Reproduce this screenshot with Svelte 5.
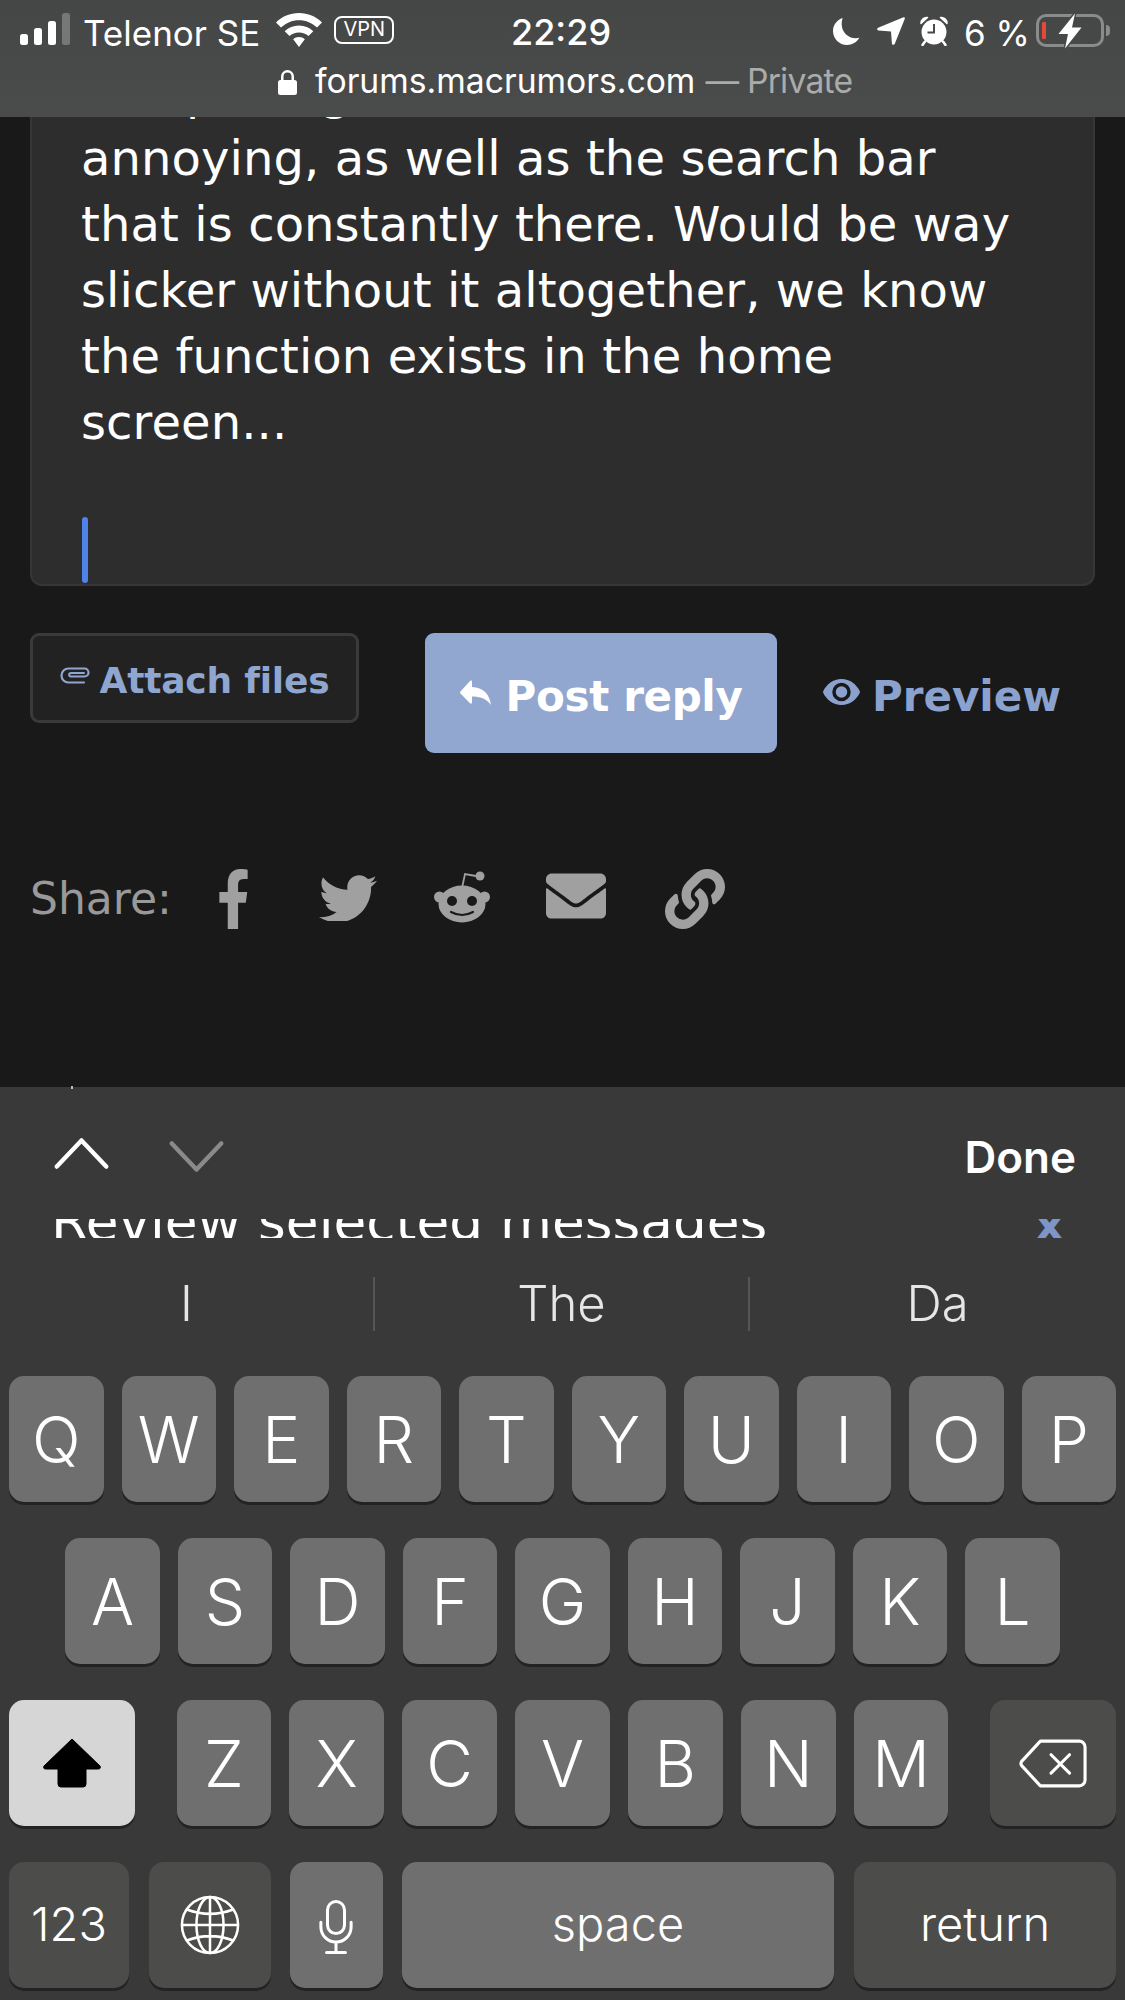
<script>
  const rows = [
    ['Q','W','E','R','T','Y','U','I','O','P'],
    ['A','S','D','F','G','H','J','K','L'],
    ['Z','X','C','V','B','N','M']
  ];
</script>

<div class="screen">
  <main class="page">
    <section class="card">
      <p class="body">The pricing
annoying, as well as the search bar
that is constantly there. Would be way
slicker without it altogether, we know
the function exists in the home
screen...</p>
      <span class="caret"></span>
    </section>

    <div class="actions">
      <button class="attach">
        <svg class="clip" viewBox="0 0 30 17" fill="none" stroke="currentColor" stroke-width="2.200" stroke-linecap="round"><path d="M24 15.500H8.500A7 7 0 0 1 8.500 1.500H24.500A4 4 0 0 1 24.500 9.500H10.500A1.800 1.800 0 0 1 10.500 6H24"/></svg>
        Attach files
      </button>
      <button class="post">
        <svg class="reply" viewBox="0 0 31 25" fill="currentColor"><path d="M0.500 11.500L10 1C10.800 .2 12 .7 12 1.800V7C23 7.500 29.500 14 31 25C26.500 18.500 20 16.500 12 16.500V22.500C12 23.600 10.800 24.100 10 23.300L0.500 13.500A1.400 1.400 0 0 1 0.500 11.500Z"/></svg>
        Post reply
      </button>
      <button class="preview">
        <svg class="eye" viewBox="0 0 37 26" fill="currentColor"><path d="M18.500 0C10 0 3.500 5.500 .3 12A2.200 2.200 0 0 0 .3 14C3.500 20.500 10 26 18.500 26S33.500 20.500 36.700 14A2.200 2.200 0 0 0 36.700 12C33.500 5.500 27 0 18.500 0Z"/><circle cx="18.500" cy="13" r="7.500" stroke="#191919" stroke-width="3.500"/></svg>
        Preview
      </button>
    </div>

    <div class="share">
      <span class="share-label">Share:</span>
      <svg class="fb" viewBox="0 0 320 512" fill="currentColor" preserveAspectRatio="none"><path d="M279.14 288l14.22-92.66h-88.91v-60.13c0-25.35 12.42-50.06 52.24-50.06h40.42V6.26S260.43 0 225.36 0c-73.22 0-121.08 44.38-121.08 124.72v70.62H22.89V288h81.39v224h100.17V288z"/></svg>
      <svg class="tw" viewBox="0 32 512 416" fill="currentColor"><path d="M459.37 151.716c.325 4.548.325 9.097.325 13.645 0 138.72-105.583 298.558-298.558 298.558-59.452 0-114.68-17.219-161.137-47.106 8.447.974 16.568 1.299 25.34 1.299 49.055 0 94.213-16.568 130.274-44.832-46.132-.975-84.792-31.188-98.112-72.772 6.498.974 12.995 1.624 19.818 1.624 9.421 0 18.843-1.3 27.614-3.573-48.081-9.747-84.143-51.98-84.143-102.985v-1.299c13.969 7.797 30.214 12.67 47.431 13.319-28.264-18.843-46.781-51.005-46.781-87.391 0-19.492 5.197-37.36 14.294-52.954 51.655 63.675 129.3 105.258 216.365 109.807-1.624-7.797-2.599-15.918-2.599-24.04 0-57.828 46.782-104.934 104.934-104.934 30.213 0 57.502 12.67 76.67 33.137 23.715-4.548 46.456-13.32 66.599-25.34-7.798 24.366-24.366 44.833-46.132 57.827 21.117-2.273 41.584-8.122 60.426-16.243-14.292 20.791-32.161 39.308-52.628 54.253z"/></svg>
      <svg class="rd" viewBox="0 0 56 52" fill="currentColor">
        <path d="M28 17 L31 3 L42 5" fill="none" stroke="currentColor" stroke-width="1.800"/>
        <circle cx="46" cy="5" r="4.500"/>
        <circle cx="5.500" cy="26" r="5.500"/>
        <circle cx="50.500" cy="26" r="5.500"/>
        <ellipse cx="28" cy="33" rx="23.500" ry="18.500"/>
        <circle cx="18" cy="30" r="5" fill="#191919"/>
        <circle cx="38" cy="30" r="5" fill="#191919"/>
        <path d="M17 41 Q28 47 39 41" fill="none" stroke="#191919" stroke-width="2.200" stroke-linecap="round"/>
      </svg>
      <svg class="ml" viewBox="0 64 512 384" fill="currentColor"><path d="M502.3 190.8c3.9-3.1 9.7-.2 9.7 4.7V400c0 26.5-21.5 48-48 48H48c-26.5 0-48-21.5-48-48V195.6c0-5 5.7-7.8 9.7-4.7 22.4 17.4 52.1 39.5 154.1 113.6 21.1 15.4 56.7 47.8 92.2 47.6 35.7.3 72-32.8 92.3-47.6 102-74.1 131.6-96.3 154-113.7zM256 320c23.2.4 56.6-29.2 73.4-41.4 132.7-96.3 142.8-104.7 173.4-128.7 5.8-4.5 9.2-11.5 9.2-18.9v-19c0-26.5-21.5-48-48-48H48C21.5 64 0 85.5 0 112v19c0 7.4 3.4 14.3 9.2 18.9 30.6 23.9 40.7 32.4 173.4 128.7 16.8 12.2 50.2 41.8 73.4 41.4z"/></svg>
      <svg class="lk" viewBox="0 0 512 512" fill="currentColor"><path d="M326.612 185.391c59.747 59.809 58.927 155.698.36 214.59-.11.12-.24.25-.36.37l-67.2 67.2c-59.27 59.27-155.699 59.262-214.96 0-59.27-59.26-59.27-155.7 0-214.96l37.106-37.106c9.84-9.84 26.786-3.3 27.294 10.606.648 17.722 3.826 35.527 9.69 52.721 1.986 5.822.567 12.262-3.783 16.612l-13.087 13.087c-28.026 28.026-28.905 73.66-1.155 101.96 28.024 28.579 74.086 28.749 102.325.51l67.2-67.19c28.191-28.191 28.073-73.757 0-101.83-3.701-3.694-7.429-6.564-10.341-8.569a16.037 16.037 0 0 1-6.947-12.606c-.396-10.567 3.348-21.456 11.698-29.806l21.054-21.055c5.521-5.521 14.182-6.199 20.584-1.731a152.482 152.482 0 0 1 20.522 17.197zM467.547 44.449c-59.261-59.262-155.69-59.27-214.96 0l-67.2 67.2c-.12.12-.25.25-.36.37-58.566 58.892-59.387 154.781.36 214.59a152.454 152.454 0 0 0 20.521 17.196c6.402 4.468 15.064 3.789 20.584-1.731l21.054-21.055c8.35-8.35 12.094-19.239 11.698-29.806a16.037 16.037 0 0 0-6.947-12.606c-2.912-2.005-6.64-4.875-10.341-8.569-28.073-28.073-28.191-73.639 0-101.83l67.2-67.19c28.239-28.239 74.3-28.069 102.325.51 27.75 28.3 26.872 73.934-1.155 101.96l-13.087 13.087c-4.35 4.35-5.769 10.79-3.783 16.612 5.864 17.194 9.042 34.999 9.69 52.721.509 13.906 17.454 20.446 27.294 10.606l37.106-37.106c59.271-59.259 59.271-155.699.001-214.959z"/></svg>
    </div>
  </main>

  <header class="bar">
    <div class="status">
      <div class="st-left">
        <div class="signal"><i class="s1"></i><i class="s2"></i><i class="s3"></i><i class="s4"></i></div>
        <span class="carrier">Telenor SE</span>
        <svg class="wifi" viewBox="0 0 46 34" fill="#fff">
          <path d="M23 0C14 0 6 3.500 0 9.500L5 14.500C10 9.800 16 7.200 23 7.200S36 9.800 41 14.500L46 9.500C40 3.500 32 0 23 0Z"/>
          <path d="M23 12.500C17.500 12.500 12.500 14.700 8.700 18.200L13.500 23C16 20.800 19.300 19.500 23 19.500S30 20.800 32.500 23L37.300 18.200C33.500 14.700 28.500 12.500 23 12.500Z"/>
          <path d="M23 24C20.800 24 18.800 24.800 17.200 26.200L23 34L28.800 26.200C27.200 24.800 25.200 24 23 24Z"/>
        </svg>
        <span class="vpn">VPN</span>
      </div>
      <span class="time">22:29</span>
      <div class="st-right">
        <svg class="moon" viewBox="0 0 28 28" fill="#fff"><path d="M10 0C4 2 0 7.500 0 13.500C0 21.500 6.500 28 14.500 28C20 28 24.800 25 27.300 20.500C26 20.800 24.800 21 23.500 21C15.500 21 9 14.500 9 6.500C9 4.200 9.300 2 10 0Z"/></svg>
        <svg class="arrow" viewBox="0 0 28 28" fill="#fff"><path d="M26.500 .3C27.500 0 28.200 .7 27.800 1.700L17.800 26.800C17.200 28.300 15 28 14.900 26.400L14 14.500L1.500 13.500C0 13.400 -.3 11.400 1.100 10.800Z"/></svg>
        <svg class="alarm" viewBox="0 0 28 30">
          <circle cx="14" cy="16" r="12.500" fill="#fff"/>
          <path d="M1 7.500C1 3.500 4 1 7.500 1.500ZM27 7.500C27 3.500 24 1 20.500 1.500Z" fill="#fff" stroke="#fff" stroke-width="1.500" stroke-linejoin="round"/>
          <path d="M14 8V16.500H7.500" fill="none" stroke="#484949" stroke-width="2"/>
          <path d="M5 25.500L2.500 29M23 25.500L25.500 29" stroke="#fff" stroke-width="2.500" stroke-linecap="round"/>
        </svg>
        <span class="pct">6 %</span>
        <div class="battery">
          <i class="level"></i>
          <svg class="bolt" viewBox="0 0 30 38"><path d="M20 1.500L3.500 22H13L10 36.500L26.500 15.500H17Z" fill="#fff" stroke="#484949" stroke-width="3" paint-order="stroke" stroke-linejoin="round"/></svg>
          <i class="tip"></i>
        </div>
      </div>
    </div>
    <div class="url">
      <svg class="lock" viewBox="0 0 19 25" fill="#fff"><path fill-rule="evenodd" d="M3 10V6.500a6.500 6.500 0 0 1 13 0V10h.500A2.500 2.500 0 0 1 19 12.500V22.500A2.500 2.500 0 0 1 16.500 25H2.500A2.500 2.500 0 0 1 0 22.500V12.500A2.500 2.500 0 0 1 2.500 10ZM5.500 10H13.500V6.500a4 4 0 0 0-8 0Z"/></svg>
      <span class="host">forums.macrumors.com</span>
      <span class="priv">— Private</span>
    </div>
  </header>

  <section class="kbd">
    <i class="speck"></i>
    <div class="accessory">
      <svg class="chev" viewBox="0 0 56 32" fill="none" stroke="#fff" stroke-width="4.500" stroke-linecap="round" stroke-linejoin="round"><path d="M2.500 29.500L28 2.500L53.500 29.500"/></svg>
      <svg class="chev dn" viewBox="0 0 56 32" fill="none" stroke="#8a8a8a" stroke-width="4.500" stroke-linecap="round" stroke-linejoin="round"><path d="M2.500 2.500L28 29.500L53.500 2.500"/></svg>
      <span class="done">Done</span>
    </div>
    <div class="peek">
      <span class="peek-text">Review selected messages</span>
      <span class="peek-x">x</span>
    </div>
    <div class="suggest">
      <span>I</span><span>The</span><span>Da</span>
    </div>

    <div class="row r0">
      {#each rows[0] as k}<span class="key">{k}</span>{/each}
    </div>
    <div class="row r1">
      {#each rows[1] as k}<span class="key">{k}</span>{/each}
    </div>
    <div class="row r2">
      <span class="key shift">
        <svg viewBox="0 0 58 50" fill="#000"><path d="M29 1L57 28C58 30 57 31 55 31H43V46A3 3 0 0 1 40 49H18A3 3 0 0 1 15 46V31H3C1 31 0 30 1 28Z" stroke="#000" stroke-linejoin="round"/></svg>
      </span>
      <div class="mid">
        {#each rows[2] as k}<span class="key">{k}</span>{/each}
      </div>
      <span class="key dark del">
        <svg viewBox="0 0 70 50" fill="none" stroke="#fff" stroke-width="3.200" stroke-linejoin="round" stroke-linecap="round"><path d="M22 2H62A6 6 0 0 1 68 8V42A6 6 0 0 1 62 48H22L3 27.500A4 4 0 0 1 3 22.500Z"/><path d="M33 16L52 35M52 16L33 35"/></svg>
      </span>
    </div>
    <div class="row r3">
      <span class="key dark small k123">123</span>
      <span class="key dark globe">
        <svg viewBox="0 0 62 62" fill="none" stroke="#fff" stroke-width="2.600"><circle cx="31" cy="31" r="29"/><ellipse cx="31" cy="31" rx="14" ry="29"/><path d="M31 2V60M2 31H60M7 15Q31 24 55 15M7 47Q31 38 55 47"/></svg>
      </span>
      <span class="key mic">
        <svg viewBox="0 0 36 58" fill="none" stroke="#fff" stroke-width="3.200" stroke-linecap="round"><rect x="9" y="2" width="18" height="34" rx="9"/><path d="M2 24V29A16 16 0 0 0 34 29V24M18 45V55M8 56H28"/></svg>
      </span>
      <span class="key small space">space</span>
      <span class="key dark small ret">return</span>
    </div>
  </section>
</div>

<style>
  :global(body) { margin: 0; background: #191919; }
  .screen {
    position: relative;
    width: 1125px;
    height: 2000px;
    overflow: hidden;
    background: #191919;
    font-family: "DejaVu Sans", sans-serif;
  }
  .page { display: flex; flex-direction: column; padding: 0 30px; }
  .card {
    box-sizing: border-box;
    height: 586px;
    background: #2d2d2d;
    border: 2px solid #363636;
    border-top: 0;
    border-radius: 0 0 12px 12px;
    padding: 59px 49px 0;
    position: relative;
  }
  .body {
    margin: 0;
    white-space: pre;
    color: #fff;
    font-size: 48px;
    line-height: 66px;
    letter-spacing: .1px;
  }
  .caret {
    position: absolute;
    left: 50px;
    bottom: 1px;
    width: 6px;
    height: 66px;
    border-radius: 3px;
    background: #4f82ea;
  }
  .actions { display: flex; align-items: flex-start; margin-top: 47px; }
  button { font-family: inherit; font-weight: 700; border: 0; padding: 0; background: none; }
  .attach {
    box-sizing: border-box;
    width: 329px;
    height: 90px;
    padding-top: 5px;
    display: flex;
    align-items: center;
    justify-content: center;
    gap: 10px;
    background: #222;
    border: 3px solid #3a3a3a;
    border-radius: 9px;
    color: #8fa6d0;
    font-size: 36px;
    letter-spacing: -.2px;
  }
  .clip { width: 30px; height: 17px; color: #8fa6d0; margin-top: -10px; }
  .post {
    box-sizing: border-box;
    width: 352px;
    height: 120px;
    padding-top: 7px;
    margin-left: 66px;
    display: flex;
    align-items: center;
    justify-content: center;
    gap: 15px;
    background: #92a7d0;
    border-radius: 9px;
    color: #fff;
    font-size: 42px;
    letter-spacing: -.35px;
  }
  .reply { width: 31px; height: 25px; margin-top: -9px; }
  .preview {
    box-sizing: border-box;
    height: 120px;
    padding-top: 7px;
    margin-left: 46px;
    display: flex;
    align-items: center;
    gap: 12px;
    color: #8ba2cf;
    font-size: 42px;
  }
  .eye { width: 37px; height: 26px; margin-top: -10px; }
  .share { display: flex; align-items: center; margin-top: 116px; height: 60px; color: #a0a0a0; position: relative; }
  .share-label { font-size: 44px; width: 187px; color: #999; margin-top: -2px; }
  .fb { width: 33px; height: 60px; }
  .tw { width: 58px; height: 48px; margin-left: 69px; margin-top: -4px; }
  .rd { width: 56px; height: 52px; margin-left: 57px; margin-top: -4px; }
  .ml { width: 60px; height: 46px; margin-left: 56px; margin-top: -6px; }
  .lk { width: 60px; height: 60px; margin-left: 59px; }

  .bar {
    position: absolute;
    top: 0; left: 0; right: 0;
    height: 117px;
    background: linear-gradient(#454646, #4a4b4b);
    color: #fff;
    font-family: Inter, sans-serif;
  }
  .status { position: relative; height: 60px; }
  .st-left { position: absolute; left: 20px; top: 13px; display: flex; align-items: flex-start; }
  .signal { display: flex; align-items: flex-end; gap: 6px; height: 32px; }
  .signal i { display: block; width: 8px; border-radius: 2.500px; background: #fff; }
  .s1 { height: 11px; }
  .s2 { height: 17px; }
  .s3 { height: 24px; }
  .signal .s4 { height: 32px; background: #767777; }
  .carrier { font-size: 35px; line-height: 40px; margin-left: 13px; white-space: nowrap; }
  .wifi { width: 46px; height: 34px; margin-left: 15.500px; }
  .vpn {
    box-sizing: border-box;
    width: 60px;
    height: 28px;
    margin: 3px 0 0 12.500px;
    border: 2.500px solid #fff;
    border-radius: 8px;
    font-size: 20px;
    line-height: 23px;
    text-align: center;
  }
  .time { position: absolute; left: 511px; top: 12px; font-size: 36px; font-weight: 500; line-height: 40px; }
  .st-right { position: absolute; left: 833px; top: 13px; display: flex; align-items: flex-start; }
  .moon { width: 27px; height: 27px; margin-top: 5px; }
  .arrow { width: 28px; height: 28px; margin: 4px 0 0 17px; }
  .alarm { width: 28px; height: 30px; margin: 3px 0 0 15px; }
  .pct { font-size: 35px; line-height: 40px; margin-left: 16px; width: 72px; white-space: nowrap; }
  .battery {
    position: relative;
    box-sizing: border-box;
    width: 68px;
    height: 33px;
    margin-top: 1px;
    border: 3px solid #8a8b8b;
    border-radius: 10px;
  }
  .level { position: absolute; left: 3px; top: 5px; width: 4px; height: 17px; border-radius: 1px; background: #e8473a; }
  .bolt { position: absolute; left: 16px; top: -5px; width: 30px; height: 38px; }
  .tip { position: absolute; right: -9px; top: 8px; width: 4px; height: 11px; border-radius: 0 4px 4px 0; background: #8a8b8b; }
  .url { position: absolute; left: 278px; top: 58px; display: flex; align-items: center; height: 44px; font-size: 33.700px; white-space: nowrap; }
  .lock { width: 19px; height: 25px; margin-right: 18px; margin-top: 4px; }
  .host { margin-right: 10px; }
  .priv { color: #aaabab; letter-spacing: -.8px; }

  .kbd {
    position: absolute;
    left: 0; right: 0; bottom: 0;
    height: 913px;
    background: #393939;
    font-family: Inter, sans-serif;
    color: #fff;
  }
  .speck { position: absolute; left: 71px; top: -1px; width: 2px; height: 3px; background: #bbb; }
  .accessory { position: relative; height: 132px; display: flex; align-items: flex-start; padding-left: 54px; }
  .chev { width: 55px; height: 31px; margin-top: 51px; }
  .dn { margin-left: 60px; margin-top: 54px; }
  .done { position: absolute; right: 49px; top: 46px; font-size: 44px; font-weight: 600; line-height: 48px; }
  .peek { position: relative; height: 19px; overflow: hidden; }
  .peek-text { position: absolute; left: 51px; bottom: 0; font-family: "DejaVu Sans", sans-serif; font-size: 53.300px; line-height: 53px; white-space: nowrap; transform: translateY(11px); }
  .peek-x { position: absolute; left: 1035px; bottom: 0; font-family: "DejaVu Sans", sans-serif; font-weight: 700; font-size: 45px; line-height: 45px; color: #7e95c8; transform: translateY(9px); }
  .suggest { display: grid; grid-template-columns: 375px 375px 375px; grid-template-rows: 54px; margin: 39px 0 45px; }
  .suggest span { display: block; text-align: center; height: 54px; font-size: 49px; line-height: 54px; font-weight: 350; color: #e6e6e6; border-right: 2px solid #555; box-sizing: border-box; }
  .suggest span:last-child { border-right: 0; }

  .row { display: flex; height: 126px; margin-bottom: 36px; gap: 18px; }
  .r0 { padding: 0 9px; }
  .r1 { justify-content: center; }
  .r2 { padding: 0 9px; gap: 0; justify-content: space-between; }
  .mid { display: flex; gap: 18.400px; }
  .r3 { padding: 0 9px; gap: 0; }
  .key {
    box-sizing: border-box;
    width: 94.500px;
    height: 126px;
    display: flex;
    align-items: center;
    justify-content: center;
    flex: none;
    background: #6f6f6f;
    border-radius: 15px;
    box-shadow: 0 3px 0 #232323;
    font-size: 64px;
    font-weight: 300;
    color: #fff;
  }
  .dark { background: #4c4c4a; }
  .small { font-size: 47px; font-weight: 350; padding-bottom: 3px; }
  .shift { width: 126px; background: #d6d6d6; }
  .shift svg { width: 58px; height: 50px; }
  .del { width: 126px; }
  .del svg { width: 68px; height: 49px; }
  .k123 { width: 120px; }
  .globe { width: 122px; margin-left: 20px; }
  .globe svg { width: 60px; height: 60px; }
  .mic { width: 93px; margin-left: 19px; }
  .mic svg { width: 34px; height: 56px; margin-top: 4px; margin-left: -2px; }
  .space { width: 432px; margin-left: 19px; }
  .ret { width: 262px; margin-left: 20px; }
</style>
